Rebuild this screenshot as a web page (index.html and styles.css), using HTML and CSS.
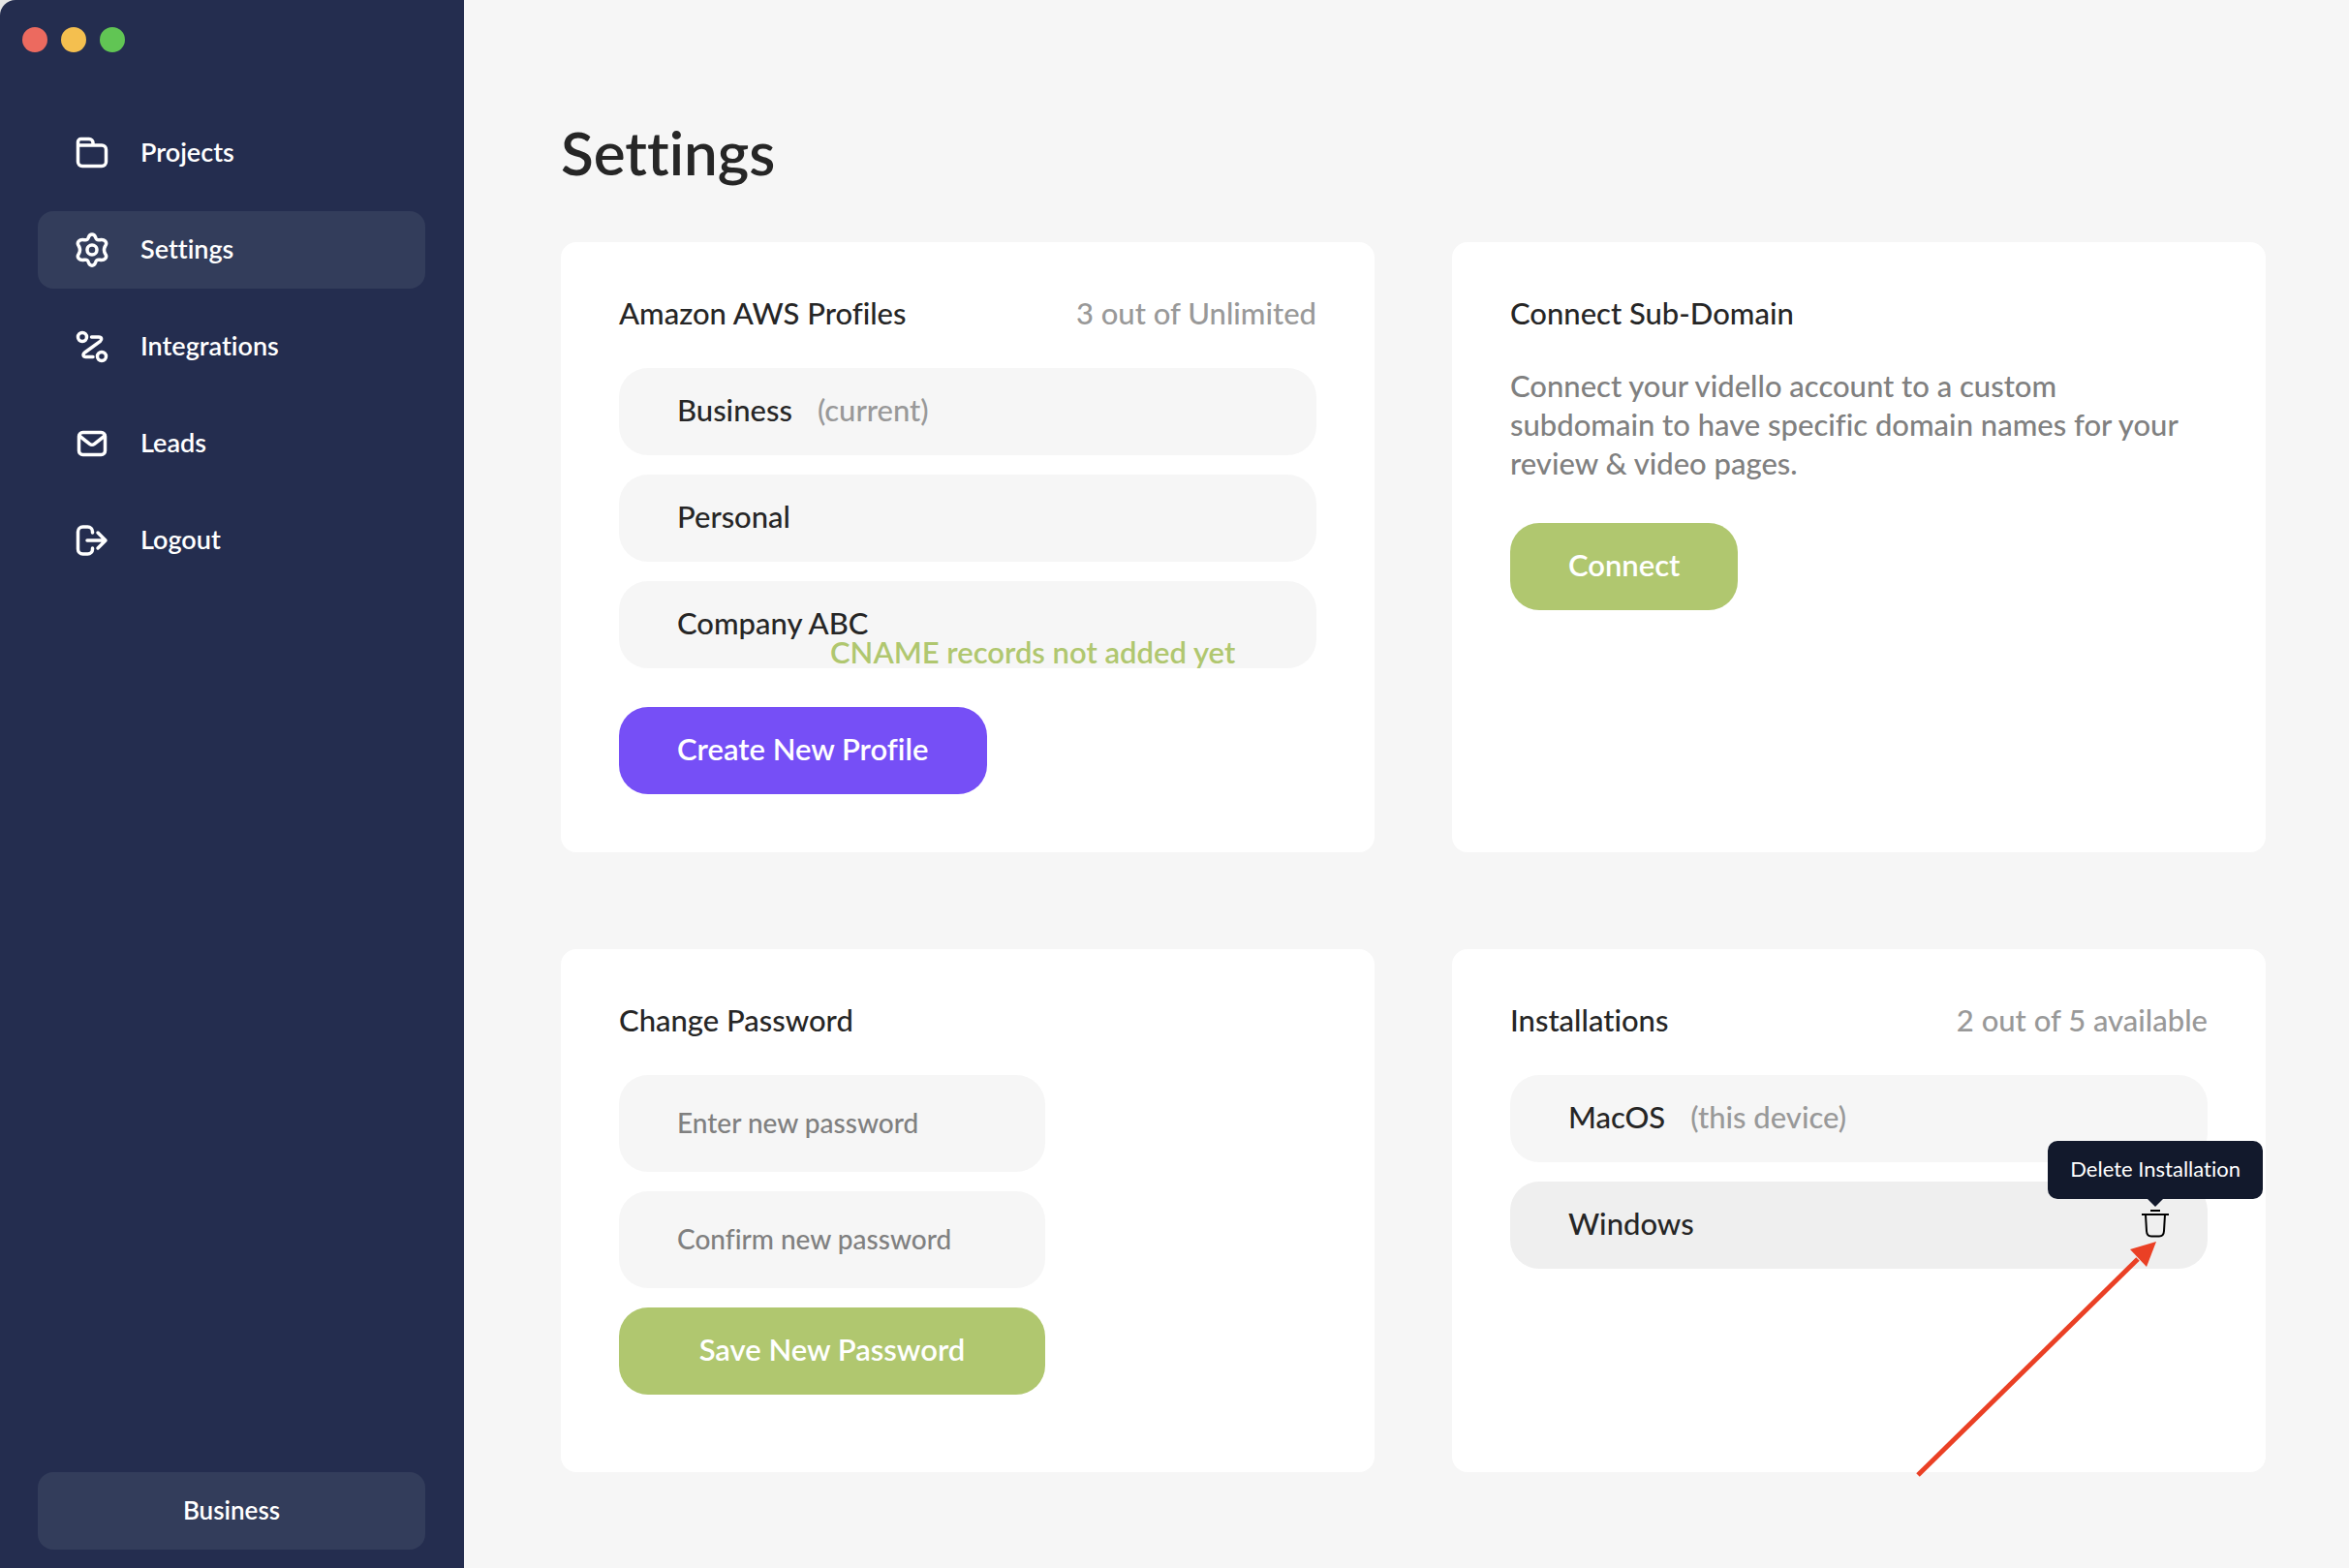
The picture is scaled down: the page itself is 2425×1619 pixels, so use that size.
FILE: index.html
```html
<!DOCTYPE html>
<html lang="en">
<head>
<meta charset="utf-8">
<meta name="viewport" content="width=device-width, initial-scale=1">
<title>Settings</title>
<link rel="stylesheet" href="styles.css">
</head>
<body>
<div class="app">
  <aside class="sidebar">
    <div class="window-controls" aria-hidden="true">
      <span class="dot dot-close"></span><span class="dot dot-minimize"></span><span class="dot dot-zoom"></span>
    </div>
    <nav class="nav">
      <a class="nav-item" href="#projects">
        <svg class="icon" viewBox="0 0 36 36"><path d="M3.500 27V6.500a3 3 0 0 1 3-3h8.500a4 4 0 0 1 4 4V10M3.500 10H28a4.500 4.500 0 0 1 4.500 4.500V27a4.500 4.500 0 0 1-4.500 4.500H8A4.500 4.500 0 0 1 3.500 27z"/></svg>
        <span class="nav-label">Projects</span></a>
      <a class="nav-item active" href="#settings" aria-current="page">
        <svg class="icon" viewBox="0 0 36 36"><circle cx="18" cy="18" r="5"/><path d="M14.500 4.800C15.800 0.900 20.200 0.900 21.500 4.800C22.300 7.500 23.300 8.200 26 7.700C31 6.800 34.200 10.200 31.800 13.800C29.900 16.800 29.900 19.200 31.800 22.200C34.200 25.800 31 29.200 26 28.300C23.300 27.800 22.300 28.500 21.500 31.200C20.200 35.100 15.800 35.100 14.500 31.200C13.700 28.500 12.700 27.800 10 28.300C5 29.200 1.800 25.800 4.200 22.200C6.100 19.200 6.100 16.800 4.200 13.800C1.800 10.200 5 6.800 10 7.700C12.700 8.200 13.700 7.500 14.500 4.800z"/></svg>
        <span class="nav-label">Settings</span></a>
      <a class="nav-item" href="#integrations">
        <svg class="icon" viewBox="0 0 36 36"><circle cx="8" cy="8" r="4.500"/><circle cx="28" cy="28" r="4.500"/><path d="M17.500 8H25c3 0 3.500 2.500 1.500 4.300L10.500 24c-2.500 2-1.500 4.500 1 4.500H19"/></svg>
        <span class="nav-label">Integrations</span></a>
      <a class="nav-item" href="#leads">
        <svg class="icon" viewBox="0 0 36 36"><rect x="4.500" y="6.500" width="27" height="23" rx="4"/><path d="M5.500 10.500 15.500 18.300q2.500 2 5 0L30.500 10.500"/></svg>
        <span class="nav-label">Leads</span></a>
      <a class="nav-item" href="#logout">
        <svg class="icon" viewBox="0 0 36 36"><path d="M18.500 10V9a5 5 0 0 0-5-5H8.500a5 5 0 0 0-5 5v18a5 5 0 0 0 5 5h5a5 5 0 0 0 5-5v-1M13 18H32M24 10l8 8-8 8"/></svg>
        <span class="nav-label">Logout</span></a>
    </nav>
    <button class="account" type="button">Business</button>
  </aside>

  <main class="main">
    <h1 class="page-title">Settings</h1>
    <div class="cards">
      <section class="card">
        <header class="card-head"><h2>Amazon AWS Profiles</h2><span class="quota">3 out of Unlimited</span></header>
        <ul class="rows">
          <li class="row">Business <span class="note">(current)</span></li>
          <li class="row">Personal</li>
          <li class="row">Company ABC <span class="status">CNAME records not added yet</span></li>
        </ul>
        <button class="btn btn-primary" type="button">Create New Profile</button>
      </section>

      <section class="card">
        <header class="card-head"><h2>Connect Sub-Domain</h2></header>
        <p class="description">Connect your vidello account to a custom subdomain to have specific domain names for your review &amp; video pages.</p>
        <button class="btn btn-green" type="button">Connect</button>
      </section>

      <section class="card">
        <header class="card-head"><h2>Change Password</h2></header>
        <form class="password-form">
          <input class="field" type="password" placeholder="Enter new password" aria-label="Enter new password">
          <input class="field" type="password" placeholder="Confirm new password" aria-label="Confirm new password">
          <button class="btn btn-green" type="submit">Save New Password</button>
        </form>
      </section>

      <section class="card">
        <header class="card-head"><h2>Installations</h2><span class="quota">2 out of 5 available</span></header>
        <ul class="rows">
          <li class="row">MacOS <span class="note">(this device)</span></li>
          <li class="row row-hover">Windows
            <button class="delete" type="button" aria-label="Delete Installation">
              <svg class="trash" viewBox="0 0 28 30"><path d="M9 2H19M0 6H28M4 6 5 23Q5.300 28.500 10 28.500H18Q22.700 28.500 23 23L24 6"/></svg>
              <span class="tooltip" role="tooltip">Delete Installation</span>
              <svg class="pointer" viewBox="0 0 250 250"><path class="pointer-line" d="M3 245 230 22"/><path class="pointer-head" d="M249 4 222 12 239 30z"/></svg>
            </button>
          </li>
        </ul>
      </section>
    </div>
  </main>
</div>
</body>
</html>
```
FILE: styles.css
```css
* { box-sizing: border-box; }

body {
  margin: 0;
  background: #f6f6f6;
  color: #262626;
  font-family: Lato, "Open Sans", sans-serif;
  font-size: 31px;
  font-weight: 500;
  font-variant-ligatures: none;
  line-height: 30px;
}

button, input { font: inherit; border: 0; }
h1, h2, p, ul { margin: 0; padding: 0; }
ul { list-style: none; }

.app { display: flex; min-height: 100vh; background: #e6e6e6; }

.sidebar {
  flex: 0 0 479px;
  display: flex;
  flex-direction: column;
  padding: 28px 40px 19px 39px;
  background: #242d4f;
  border-top-left-radius: 16px;
  color: #fff;
  font-size: 26px;
  font-weight: 600;
}

.window-controls { display: flex; gap: 14px; margin: 0 0 64px -16px; }
.dot { width: 26px; height: 26px; border-radius: 50%; }
.dot-close { background: #ec6a5f; }
.dot-minimize { background: #f4bf4f; }
.dot-zoom { background: #61c554; }

.nav { display: flex; flex-direction: column; gap: 20px; font-size: 27px; }
.nav-item {
  display: flex;
  align-items: center;
  gap: 32px;
  height: 80px;
  padding: 0 38px;
  border-radius: 16px;
  color: inherit;
  text-decoration: none;
}
.nav-label { padding-bottom: 2px; }
.active, .account { background: #333d5b; }
.icon {
  width: 36px;
  height: 36px;
  fill: none;
  stroke: #fff;
  stroke-width: 3.5;
  stroke-linecap: round;
  stroke-linejoin: round;
}
.account { height: 80px; margin-top: auto; padding: 0 0 2px; border-radius: 16px; color: inherit; }

.main { flex: 1; padding: 127px 86px 99px 100px; background: #f6f6f6; }
.page-title { margin-bottom: 63px; font-size: 62px; font-weight: 600; line-height: 60px; }
.cards { display: grid; grid-template-columns: 1fr 1fr; gap: 100px 80px; }
.card { padding: 58px 60px 60px; border-radius: 16px; background: #fff; }
.card-head { display: flex; justify-content: space-between; margin-bottom: 42px; }
.card-head h2 { font-size: 31px; font-weight: 500; }
.quota, .note { color: #999; }
.note { margin-left: 26px; }

.rows { display: grid; gap: 20px; }
.row {
  position: relative;
  display: flex;
  align-items: center;
  height: 90px;
  padding: 0 40px 4px 60px;
  border-radius: 30px;
  background: #f6f6f6;
}
.row-hover { background: #efefef; }
.status { position: absolute; left: 218px; top: 58px; color: #b0c76f; font-weight: 600; white-space: nowrap; }

.btn { height: 90px; padding: 0 60px 4px; border-radius: 30px; color: #fff; font-weight: 600; }
.btn-primary { margin-top: 40px; background: #764ff6; }
.btn-green { background: #b0c76f; }

.description { max-width: 710px; margin: -2px 0 42px; color: #808080; line-height: 40px; }

.password-form { display: grid; gap: 20px; width: 440px; margin-bottom: 20px; }
.field { width: 100%; height: 100px; padding: 0 60px 2px; border-radius: 30px; background: #f6f6f6; font-size: 28px; font-weight: 500; }
.field::placeholder { color: #808080; }

.delete { position: relative; display: flex; margin-left: auto; padding: 0; background: none; }
.trash { width: 28px; height: 30px; fill: none; stroke: #000; stroke-width: 2; }
.tooltip {
  position: absolute;
  right: -97px;
  bottom: 40px;
  padding: 14px 23px 16px;
  border-radius: 10px;
  background: #12192c;
  color: #fff;
  font-size: 22px;
  font-weight: 400;
  white-space: nowrap;
}
.tooltip::after {
  content: "";
  position: absolute;
  left: calc(50% - 8px);
  top: 100%;
  border: 8px solid transparent;
  border-top-color: #12192c;
  border-bottom: 0;
}
.pointer { position: absolute; right: 12px; top: 30px; width: 250px; height: 250px; pointer-events: none; }
.pointer-line { fill: none; stroke: #ea4025; stroke-width: 5; stroke-linecap: butt; }
.pointer-head { fill: #ea4025; }
```
